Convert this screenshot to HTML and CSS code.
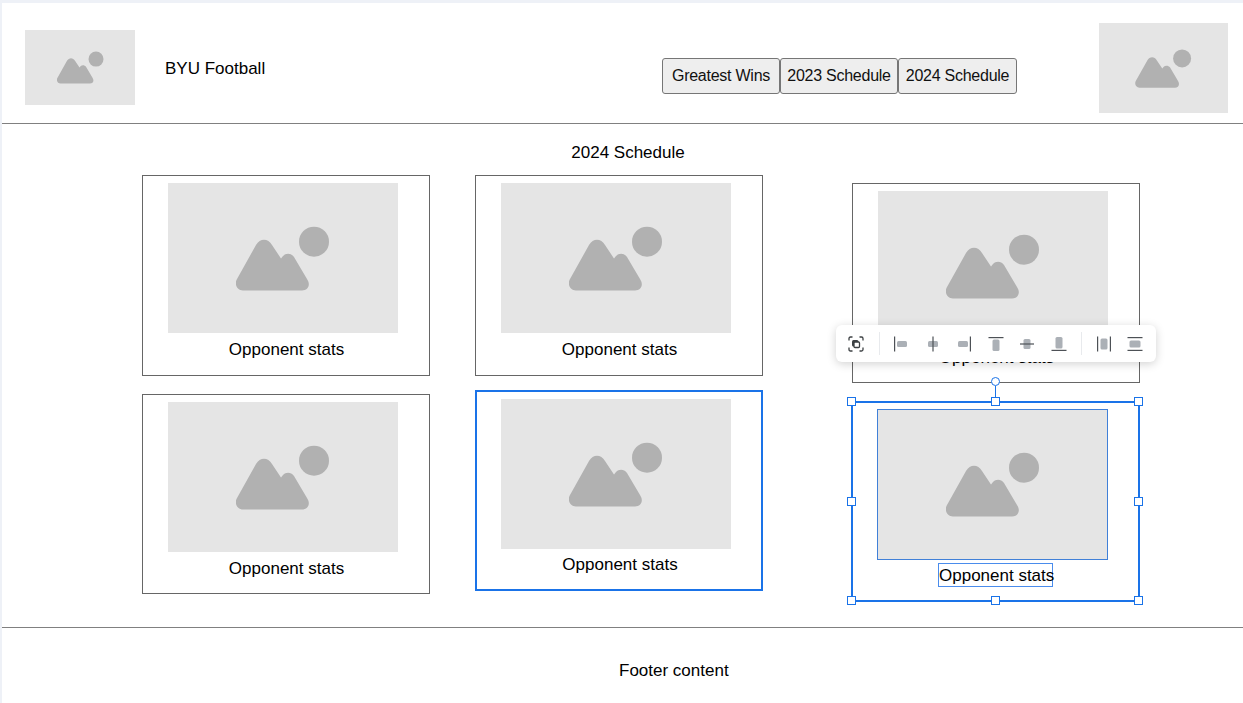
FILE: index.html
```html
<!DOCTYPE html>
<html lang="en">
<head>
  <meta charset="UTF-8">
  <title>BYU Football</title>
  <link rel="stylesheet" href="styles.css">
</head>
<body>
  <svg class="defs" width="0" height="0">
    <symbol id="picture" viewBox="0 0 94 65">
      <path d="M7 64.500C1 64.500-2 58 1 53L20 19C24 12 32 12 36 19L45 32.500L47 30C50 27 55 27 58 31L71 53C75 59 72 64.500 66 64.500Z"/>
      <circle cx="78" cy="15.700" r="15"/>
    </symbol>
  </svg>

  <div id="page">
    <header class="site-header">
      <div class="placeholder logo"><svg class="pic-small"><use href="#picture"/></svg></div>
      <div class="site-title">BYU Football</div>
      <nav class="site-nav">
        <button>Greatest Wins</button>
        <button>2023 Schedule</button>
        <button>2024 Schedule</button>
      </nav>
      <div class="placeholder banner"><svg class="pic-medium"><use href="#picture"/></svg></div>
    </header>

    <main class="schedule">
      <h1>2024 Schedule</h1>
      <div class="columns">
        <div class="column column-one">
          <div class="card card-tall">
            <div class="placeholder photo"><svg class="pic-large"><use href="#picture"/></svg></div>
            <p class="caption">Opponent stats</p>
          </div>
          <div class="card">
            <div class="placeholder photo"><svg class="pic-large"><use href="#picture"/></svg></div>
            <p class="caption">Opponent stats</p>
          </div>
        </div>

        <div class="column column-two">
          <div class="card card-tall">
            <div class="placeholder photo"><svg class="pic-large"><use href="#picture"/></svg></div>
            <p class="caption">Opponent stats</p>
          </div>
          <div class="card card-active">
            <div class="placeholder photo"><svg class="pic-large"><use href="#picture"/></svg></div>
            <p class="caption">Opponent stats</p>
          </div>
        </div>

        <div class="column column-three">
          <div class="card">
            <div class="placeholder photo"><svg class="pic-large"><use href="#picture"/></svg></div>
            <p class="caption">Opponent stats</p>
          </div>
          <div class="card card-selected">
            <div class="placeholder photo"><svg class="pic-large"><use href="#picture"/></svg></div>
            <p class="caption"><span>Opponent stats</span></p>
            <i class="rotate-line"></i>
            <i class="rotate-handle"></i>
            <i class="handle top-left"></i>
            <i class="handle top-mid"></i>
            <i class="handle top-right"></i>
            <i class="handle mid-left"></i>
            <i class="handle mid-right"></i>
            <i class="handle bottom-left"></i>
            <i class="handle bottom-mid"></i>
            <i class="handle bottom-right"></i>
          </div>
        </div>
      </div>
    </main>

    <footer class="site-footer">Footer content</footer>

    <div class="toolbar">
      <svg class="tool" viewBox="0 0 20 20">
        <path class="line" fill="none" d="M3 6.500V4.500Q3 3 4.500 3H6.500M13.500 3H15.500Q17 3 17 4.500V6.500M17 13.500V15.500Q17 17 15.500 17H13.500M6.500 17H4.500Q3 17 3 15.500V13.500"/>
        <rect x="6" y="6" width="6.500" height="6.500" rx="1.500" fill="#3c4043"/>
        <rect x="8" y="8" width="5.500" height="5.500" rx="1" fill="#fff" stroke="#3c4043" stroke-width="1.300"/>
      </svg>
      <span class="tool-sep"></span>
      <svg class="tool" viewBox="0 0 20 20"><rect class="bar" x="6" y="7" width="10" height="6" rx="1.500"/><rect class="stem" x="3" y="2.500" width="1.200" height="15"/></svg>
      <svg class="tool" viewBox="0 0 20 20"><rect class="bar" x="5" y="7" width="10" height="6" rx="1.500"/><rect class="stem" x="9.400" y="2.500" width="1.200" height="15"/></svg>
      <svg class="tool" viewBox="0 0 20 20"><rect class="bar" x="4" y="7" width="10" height="6" rx="1.500"/><rect class="stem" x="15.800" y="2.500" width="1.200" height="15"/></svg>
      <svg class="tool" viewBox="0 0 20 20"><rect class="bar" x="6.500" y="5.500" width="7" height="11.500" rx="1.500"/><rect class="stem" x="2.500" y="3" width="15" height="1.200"/></svg>
      <svg class="tool" viewBox="0 0 20 20"><rect class="bar" x="6.500" y="5" width="7" height="10" rx="1.500"/><rect class="stem" x="3" y="9.400" width="14" height="1.200"/></svg>
      <svg class="tool" viewBox="0 0 20 20"><rect class="bar" x="6.500" y="3" width="7" height="11.500" rx="1.500"/><rect class="stem" x="2.500" y="15.800" width="15" height="1.200"/></svg>
      <span class="tool-sep"></span>
      <svg class="tool" viewBox="0 0 20 20"><rect class="bar" x="6.500" y="4.500" width="7" height="11" rx="1.500"/><rect class="stem" x="3" y="2.500" width="1.200" height="15"/><rect class="stem" x="15.800" y="2.500" width="1.200" height="15"/></svg>
      <svg class="tool" viewBox="0 0 20 20"><rect class="bar" x="4.500" y="6.500" width="11" height="7" rx="1.500"/><rect class="stem" x="2.500" y="3" width="15" height="1.200"/><rect class="stem" x="2.500" y="15.800" width="15" height="1.200"/></svg>
    </div>
  </div>
</body>
</html>
```

FILE: styles.css
```css
html, body {
  height: 100%;
  overflow: hidden;
}

body {
  margin: 0;
  padding: 3px 0 0 2px;
  box-sizing: border-box;
  background-color: #eef1f7;
  font-family: "Liberation Sans", Arial, sans-serif;
  font-size: 17px;
  color: #000;
}

.defs {
  position: absolute;
}

#page {
  position: relative;
  height: 700px;
  background-color: #fff;
}

.placeholder {
  display: flex;
  align-items: center;
  justify-content: center;
  background-color: #e5e5e5;
  fill: #b1b1b1;
}

.pic-small {
  width: 47px;
  height: 33px;
}

.pic-medium {
  width: 57px;
  height: 39px;
}

.pic-large {
  width: 94px;
  height: 65px;
}

/* header */
.site-header {
  display: flex;
  align-items: flex-start;
  height: 120px;
  border-bottom: 1px solid #808080;
}

.logo {
  width: 110px;
  height: 75px;
  margin: 27px 0 0 23px;
}

.site-title {
  margin: 56px 0 0 30px;
}

.site-nav {
  display: flex;
  margin: 55px 0 0 auto;
}

.site-nav button {
  width: 118px;
  height: 36px;
  padding: 0;
  background-color: #eee;
  border: 1px solid #767676;
  border-radius: 3px;
  font-family: inherit;
  font-size: 16px;
  letter-spacing: -0.25px;
  color: #111;
}

.site-nav button:last-child {
  width: 119px;
}

.banner {
  width: 129px;
  height: 90px;
  margin: 20px 15px 0 82px;
}

/* schedule */
.schedule {
  height: 503px;
}

.schedule h1 {
  margin: 0;
  padding: 20px 0 13px 11px;
  font-size: 17px;
  font-weight: normal;
  line-height: 18px;
  text-align: center;
}

.columns {
  display: flex;
  align-items: flex-start;
  padding-left: 140px;
}

.column {
  display: flex;
  flex-direction: column;
  width: 288px;
  gap: 18px;
}

.column-two {
  margin-left: 45px;
  gap: 14px;
}

.column-three {
  margin: 8px 0 0 89px;
}

.card {
  position: relative;
  box-sizing: border-box;
  width: 288px;
  height: 200px;
  padding: 7px 0 0 25px;
  border: 1px solid #666;
}

.card-tall {
  height: 201px;
}

.photo {
  width: 230px;
  height: 150px;
}

.caption {
  margin: 8px 0 0 -24px;
  line-height: 18px;
  text-align: center;
}

.card-active {
  height: 201px;
  padding: 7px 0 0 24px;
  border: 2px solid #1a73e8;
}

.card-active .caption {
  margin: 7px 0 0 -22px;
}

.card-selected {
  width: 289px;
  height: 201px;
  margin-left: -1px;
  padding: 6px 0 0 24px;
  border: 2px solid #1a73e8;
}

.card-selected .photo {
  box-sizing: border-box;
  width: 231px;
  height: 151px;
  border: 1px solid #4080d8;
}

.card-selected .caption {
  margin: 3px 0 0 -24px;
}

.card-selected .caption span {
  display: inline-block;
  box-sizing: border-box;
  width: 115px;
  height: 24px;
  border: 1px solid #4a8cec;
  line-height: 23px;
  white-space: nowrap;
  text-align: left;
}

/* selection handles */
.handle {
  position: absolute;
  box-sizing: border-box;
  width: 9px;
  height: 9px;
  background-color: #fff;
  border: 1px solid #1a73e8;
}

.top-left { top: -6px; left: -6px; }
.top-mid { top: -6px; left: 138px; }
.top-right { top: -6px; right: -5px; }
.mid-left { top: 94px; left: -6px; }
.mid-right { top: 94px; right: -5px; }
.bottom-left { bottom: -5px; left: -6px; }
.bottom-mid { bottom: -5px; left: 138px; }
.bottom-right { bottom: -5px; right: -5px; }

.rotate-line {
  position: absolute;
  top: -17px;
  left: 142px;
  width: 1px;
  height: 12px;
  background-color: #1a73e8;
}

.rotate-handle {
  position: absolute;
  top: -26px;
  left: 138px;
  box-sizing: border-box;
  width: 9px;
  height: 9px;
  background-color: #fff;
  border: 1px solid #1a73e8;
  border-radius: 50%;
}

/* floating toolbar */
.toolbar {
  position: absolute;
  top: 322px;
  left: 834px;
  display: flex;
  align-items: center;
  gap: 11.5px;
  box-sizing: border-box;
  width: 320px;
  height: 37px;
  padding-left: 10px;
  background-color: #fff;
  border-radius: 6px;
  box-shadow: 0 2px 10px rgba(0, 0, 0, 0.18);
}

.tool {
  flex: none;
  width: 20px;
  height: 20px;
}

.tool-sep {
  flex: none;
  width: 1px;
  height: 23px;
  margin-left: 1px;
  background-color: #e8eaed;
}

.bar {
  fill: #abb0b6;
}

.stem {
  fill: #4d5156;
}

.line {
  stroke: #3c4043;
  stroke-width: 1.3;
}

/* footer */
.site-footer {
  height: 72px;
  padding: 34px 0 0 617px;
  box-sizing: border-box;
  border-top: 1px solid #808080;
  line-height: 18px;
}
```
